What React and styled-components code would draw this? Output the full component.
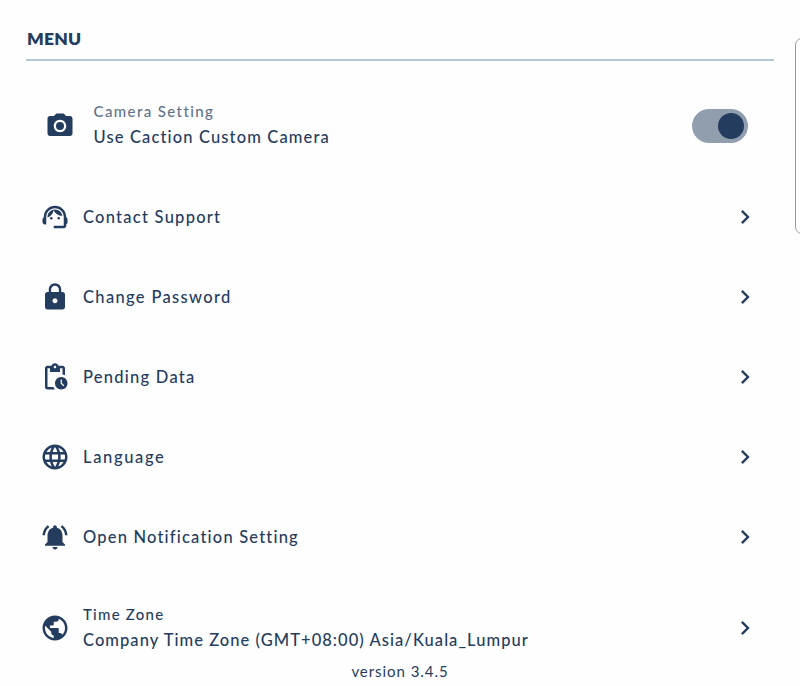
import React from "react";
import styled, { createGlobalStyle } from "styled-components";
import {
  MdPhotoCamera,
  MdSupportAgent,
  MdLock,
  MdPendingActions,
  MdLanguage,
  MdNotificationsActive,
  MdPublic,
  MdChevronRight,
} from "react-icons/md";

const navy = "#243c5e";

const GlobalStyle = createGlobalStyle`
  *, *::before, *::after { box-sizing: border-box; }
  body { margin: 0; background: #fefefe; overflow: hidden; }
`;

const Page = styled.main`
  position: relative;
  width: 800px;
  height: 686px;
  overflow: hidden;
  padding: 0 26px;
  background: #fefefe;
  color: ${navy};
  font-family: Lato, "Noto Sans", sans-serif;
`;

const Header = styled.header`
  height: 61px;
  padding: 27px 0 0 1px;
  border-bottom: 2px solid #b3c9d6;
`;

const Heading = styled.h1`
  margin: 0;
  font-size: 17.5px;
  line-height: 24px;
  font-weight: 800;
  letter-spacing: ${(p) => p.$spacing}px;
`;

const CameraRow = styled.section`
  display: flex;
  align-items: center;
  height: 116px;
  padding: 13px 26px 0 18.5px;
`;

const Row = styled.div`
  display: flex;
  align-items: center;
  height: ${(p) => p.$height || 80}px;
  padding: ${(p) => p.$top || 0}px 15.5px ${(p) => (p.$top ? 0 : 1)}px 13.5px;
`;

const IconBox = styled.span`
  display: flex;
  flex: none;
  width: 30px;
  height: 30px;
  font-size: 30px;
  margin-right: ${(p) => p.$gap}px;
`;

const Copy = styled.div`
  flex: 1;
  white-space: nowrap;
  padding-bottom: ${(p) => p.$lift || 0}px;
`;

const Label = styled.div`
  font-size: 16.5px;
  line-height: 26px;
  font-weight: 500;
  letter-spacing: ${(p) => p.$spacing}px;
`;

const Caption = styled.div`
  font-size: 15px;
  line-height: 26px;
  font-weight: 500;
  color: ${(p) => (p.$muted ? "#5f738b" : navy)};
  letter-spacing: ${(p) => p.$spacing}px;
`;

const Toggle = styled.button`
  display: flex;
  align-items: center;
  justify-content: flex-end;
  width: 56px;
  height: 34px;
  padding: 0 4.5px;
  border: 0;
  border-radius: 17px;
  background: #919eae;
`;

const Thumb = styled.span`
  width: 26px;
  height: 26px;
  border-radius: 50%;
  background: ${navy};
`;

const Chevron = styled(MdChevronRight)`
  flex: none;
  width: 28px;
  height: 28px;
`;

const Version = styled.footer`
  height: 24px;
  line-height: 24px;
  margin-top: -1px;
  text-align: center;
  font-size: 15px;
  letter-spacing: ${(p) => p.$spacing}px;
`;

const SidePanel = styled.aside`
  position: absolute;
  left: 795px;
  top: 38px;
  width: 60px;
  height: 196px;
  border: 1px solid #9b9b9b;
  border-radius: 7px;
`;

const items = [
  { icon: MdSupportAgent, label: "Contact Support", spacing: 1.25 },
  { icon: MdLock, label: "Change Password", spacing: 1.33 },
  { icon: MdPendingActions, label: "Pending Data", spacing: 1.25 },
  { icon: MdLanguage, label: "Language", spacing: 1.65 },
  { icon: MdNotificationsActive, label: "Open Notification Setting", spacing: 1.19 },
];

export default function App() {
  return (
    <>
      <GlobalStyle />
      <Page>
        <Header>
          <Heading $spacing={0.2}>MENU</Heading>
        </Header>
        <CameraRow>
          <IconBox $gap={19}><MdPhotoCamera /></IconBox>
          <Copy $lift={3}>
            <Caption $muted $spacing={1.4}>Camera Setting</Caption>
            <Label $spacing={1.14}>Use Caction Custom Camera</Label>
          </Copy>
          <Toggle type="button" role="switch" aria-checked="true" aria-label="Camera">
            <Thumb />
          </Toggle>
        </CameraRow>
        {items.map(({ icon: Icon, label, spacing }) => (
          <Row key={label}>
            <IconBox $gap={13.5}><Icon /></IconBox>
            <Copy><Label $spacing={spacing}>{label}</Label></Copy>
            <Chevron />
          </Row>
        ))}
        <Row $height={83} $top={18}>
          <IconBox $gap={13.5}><MdPublic /></IconBox>
          <Copy $lift={1}>
            <Caption $spacing={1.25}>Time Zone</Caption>
            <Label $spacing={1.05}>Company Time Zone (GMT+08:00) Asia/Kuala_Lumpur</Label>
          </Copy>
          <Chevron />
        </Row>
        <Version $spacing={0.95}>version 3.4.5</Version>
        <SidePanel />
      </Page>
    </>
  );
}
